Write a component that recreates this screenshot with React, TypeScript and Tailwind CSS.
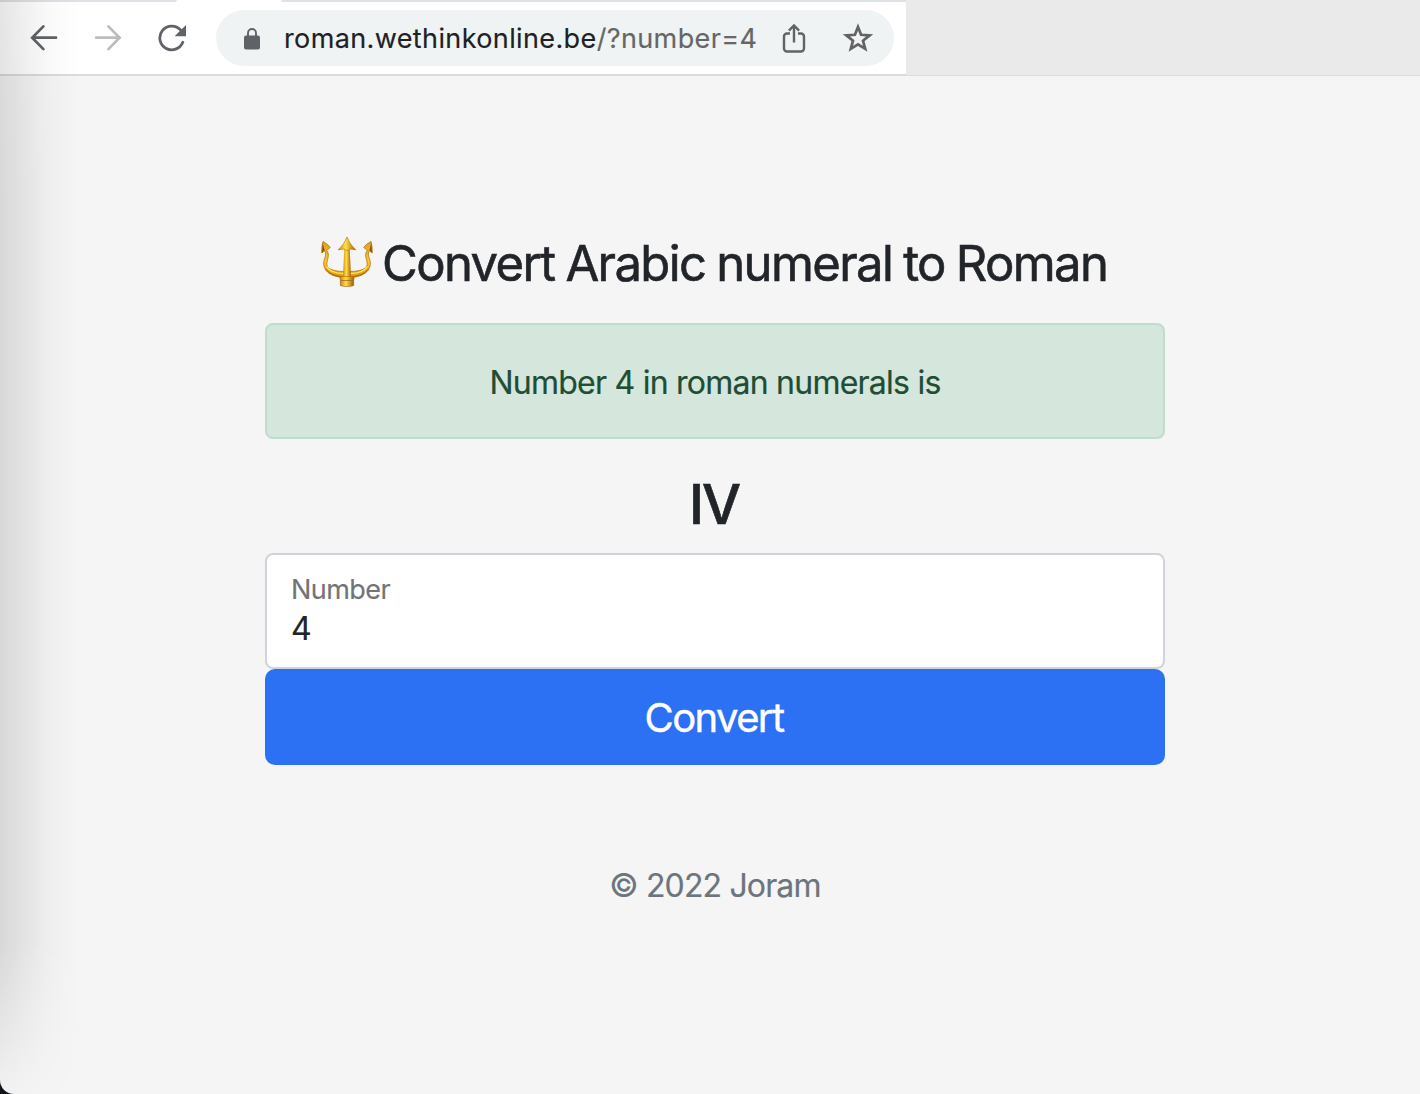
function BackIcon() {
  return (
    <svg className="h-7 w-7 shrink-0" viewBox="0 0 28 28" fill="none" stroke="#5f6368" strokeWidth="2.7" strokeLinecap="round" strokeLinejoin="miter">
      <path d="M26 13.7H2.6M13.4 2.4 2.2 13.7l11.2 11.4" />
    </svg>
  );
}

function ForwardIcon() {
  return (
    <svg className="h-7 w-7 shrink-0" viewBox="0 0 28 28" fill="none" stroke="#babcbe" strokeWidth="2.7" strokeLinecap="round">
      <path d="M2.2 13.7h23.2M14.4 2.4l11.2 11.3-11.2 11.4" />
    </svg>
  );
}

function ReloadIcon() {
  return (
    <svg className="h-7 w-7 shrink-0" viewBox="0 0 28 28" fill="none">
      <path d="M24.8 18.3A11.9 11.9 0 1 1 22.6 6" stroke="#5f6368" strokeWidth="2.8" strokeLinecap="round" />
      <path d="M28 1v11.2H16.6z" fill="#5f6368" />
    </svg>
  );
}

function LockIcon() {
  return (
    <svg className="mt-px h-[22px] w-4 shrink-0" viewBox="0 0 16 22" fill="none">
      <path d="M4 8V5a4 4 0 0 1 8 0v3" stroke="#5f6368" strokeWidth="1.9" />
      <rect y="7.5" width="16" height="14" rx="2" fill="#5f6368" />
    </svg>
  );
}

function ShareIcon() {
  return (
    <svg className="h-[30px] w-6 shrink-0" viewBox="0 0 24 30" fill="none" stroke="#636363" strokeWidth="2.4">
      <path d="M8 10.5H5a3 3 0 0 0-3 3v12a3 3 0 0 0 3 3h14a3 3 0 0 0 3-3v-12a3 3 0 0 0-3-3h-3M12 19.5V2.5M6.9 7.6 12 2.5l5.1 5.1" />
    </svg>
  );
}

function StarIcon() {
  return (
    <svg className="h-[30px] w-[30px] shrink-0" viewBox="0 0 30 30" fill="none" stroke="#636363" strokeWidth="2.7">
      <path d="m15 4 3.1 7.8 8.500.6-6.600 5.300 2.200 8.200-7.200-4.500-7.200 4.500 2.200-8.200-6.600-5.300 8.500-.6z" />
    </svg>
  );
}

function TridentIcon() {
  return (
    <svg className="h-[52px] w-[52px] shrink-0" viewBox="0 0 52 52" fill="none">
      <defs>
        <linearGradient id="gold" x1="0" y1="0" x2="0" y2="1">
          <stop offset="0" stopColor="#dfa018" />
          <stop offset="0.55" stopColor="#fccb2c" />
          <stop offset="1" stopColor="#d99a0d" />
        </linearGradient>
        <linearGradient id="shaft" x1="0" y1="0" x2="1" y2="0">
          <stop offset="0" stopColor="#c98a0c" />
          <stop offset="0.42" stopColor="#ffdf45" />
          <stop offset="1" stopColor="#a95c08" />
        </linearGradient>
      </defs>
      <path d="M2 4.5c3 2 5.5 3.2 7.2 6-1 1.4-2.7 1.8-3.6 2.7C9.5 18 5.5 23 5.8 27.5 6.3 32 13 34.5 23.5 34.5h5C39 34.5 45.7 32 46.2 27.5 46.5 23 42.5 18 46.4 13.2c-.9-.9-2.6-1.3-3.6-2.7 1.7-2.8 4.2-4 7.2-6 1 4 1.4 7.8 1.2 11.5l-2.8-2.3c-3 5 1.6 8.3.9 14C48.3 35.8 40 40 29 40.5h-6C12 40 3.7 35.8 2.7 27.7c-.7-5.7 3.9-9 .9-14L.8 16C.6 12.3 1 8.5 2 4.5Z" fill="url(#gold)" stroke="#b66f0a" strokeWidth=".8" />
      <path d="M6 29.500C8 34 15 36.300 23 36.700M46 29.500C44 34 37 36.300 29 36.700" stroke="#ffe95e" strokeWidth="1.2" />
      <path d="M4.500 32c4.500 5.300 11 7.500 18.500 7.800M47.500 32c-4.500 5.300-11 7.500-18.500 7.800" stroke="#ad6508" strokeWidth="1" />
      <path d="m1.700 6 1.900 7.100L1 15.800ZM50.300 6l-1.900 7.100 2.600 2.700Z" fill="#8e4f0b" />
      <path d="M23.300 11h5.400l1.400 31h-8.200Z" fill="url(#shaft)" />
      <path d="M26-.5c1.600 4.900 4.500 9.300 9 13.400l-6.200-.9-2.800 2-2.800-2-6.200.9C21.500 8.800 24.400 4.400 26-.5Z" fill="url(#shaft)" stroke="#b77608" strokeWidth=".6" />
      <rect x="19" y="39.500" width="14" height="4" rx="1.6" fill="url(#shaft)" stroke="#ae6907" strokeWidth=".6" />
      <path d="M19.300 43.500h13.400v5c-3 1.400-10.400 1.400-13.400 0Z" fill="url(#shaft)" stroke="#8e4f0b" strokeWidth=".5" />
    </svg>
  );
}

function Toolbar() {
  return (
    <header className="flex h-[76px] border-b border-[#dcdcdc] bg-[#eaeaea]">
      <div className="relative flex h-[75px] w-[906px] items-center border-t-2 border-b border-t-[#dee1e5] border-b-[#dadadb] bg-white pl-[30px]">
        <div className="absolute -top-0.5 left-[176px] h-0.5 w-[106px] rounded-t-sm bg-white" />
        <nav className="flex items-center gap-9">
          <BackIcon />
          <ForwardIcon />
          <ReloadIcon />
        </nav>
        <div className="ml-[30px] flex h-14 w-[678px] items-center rounded-full bg-[#eff3f4] pl-7">
          <LockIcon />
          <span className="mt-[3px] ml-6 w-[474px] text-[27px] tracking-[0.38px] whitespace-nowrap text-[#202124] [-webkit-text-stroke:0.15px]">
            roman.wethinkonline.be<span className="text-[#666666]">/?number=4</span>
          </span>
          <div className="ml-6 flex items-center gap-[37px]">
            <ShareIcon />
            <StarIcon />
          </div>
        </div>
      </div>
    </header>
  );
}

export default function App() {
  return (
    <div className="relative h-[1094px] w-[1420px] overflow-hidden bg-[#15171c] font-['Inter',sans-serif]">
      <div className="h-full overflow-hidden rounded-bl-[14px] bg-[#f5f5f5]">
        <Toolbar />
        <main className="ml-[265px] flex w-[900px] flex-col text-center text-[#212529]">
          <h1 className="mt-[157px] flex h-[60px] items-center pl-14 text-[49px] font-normal whitespace-nowrap [-webkit-text-stroke:0.6px]">
            <TridentIcon />
            <span className="mt-px ml-[9px] tracking-[-1.62px] [word-spacing:-1.2px]">Convert Arabic numeral to Roman</span>
          </h1>
          <div className="mt-[30px] flex h-[116px] items-center justify-center rounded-lg border-2 border-[#c0dccd] bg-[#d5e6dd] pt-[3px] text-[32px] tracking-[-0.76px] text-[#204d34] [-webkit-text-stroke:0.2px]">
            Number 4 in roman numerals is
          </div>
          <h2 className="mt-[31px] mb-px flex h-[68px] items-center justify-center pr-0.5 text-[55px] font-medium tracking-[-2px] [-webkit-text-stroke:0.7px]">IV</h2>
          <label className="mt-[14px] flex h-[116px] flex-col rounded-lg border-2 border-[#ced4da] bg-white pt-[17px] pl-6 text-left [-webkit-text-stroke:0.15px]">
            <span className="text-[27px] leading-[36px] tracking-[-0.55px] text-[#737477]">Number</span>
            <span className="mt-px text-[32px] leading-[40px]">4</span>
          </label>
          <button className="h-24 rounded-[10px] bg-[#2c70f4] pt-0.5 pr-0.5 text-[40px] tracking-[-1.6px] text-white [-webkit-text-stroke:0.4px]">Convert</button>
          <footer className="mt-[97px] text-[32px] leading-[48px] tracking-[-0.85px] text-[#6c757d] [-webkit-text-stroke:0.2px]">© 2022 Joram</footer>
        </main>
      </div>
      <div className="pointer-events-none absolute top-0 left-0 h-full w-20 bg-[linear-gradient(to_right,rgba(0,0,0,0.12),rgba(0,0,0,0.07)_30%,rgba(0,0,0,0.028)_60%,rgba(0,0,0,0.007)_85%,transparent)] mask-[linear-gradient(to_bottom,rgba(0,0,0,0.85),black_20%,black_86%,rgba(0,0,0,0.5)_94%,rgba(0,0,0,0.1)_100%)]" />
    </div>
  );
}
